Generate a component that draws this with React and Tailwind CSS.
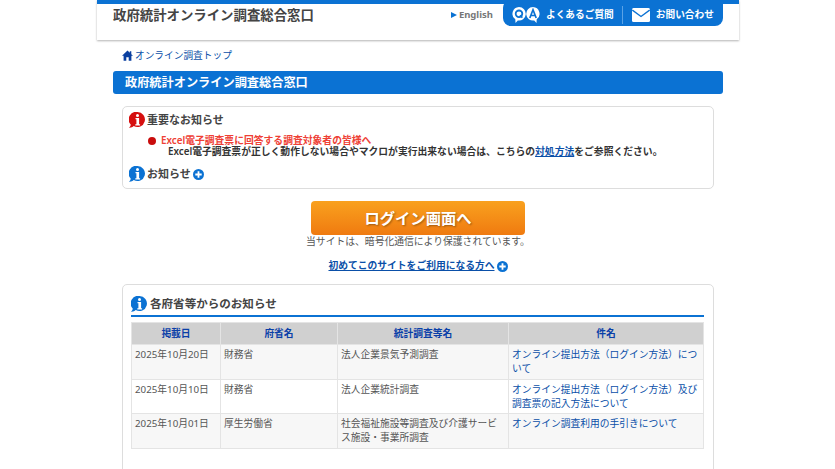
const FONT = "font-['Noto_Sans','Noto_Sans_CJK_JP',sans-serif]"

const ROWS = [
  { date: '2025年10月20日', org: '財務省', survey: '法人企業景気予測調査', title: 'オンライン提出方法（ログイン方法）について', bg: 'bg-[#f7f7f7]' },
  { date: '2025年10月10日', org: '財務省', survey: '法人企業統計調査', title: 'オンライン提出方法（ログイン方法）及び調査票の記入方法について', bg: 'bg-white' },
  { date: '2025年10月01日', org: '厚生労働省', survey: '社会福祉施設等調査及び介護サービス施設・事業所調査', title: 'オンライン調査利用の手引きについて', bg: 'bg-[#f7f7f7]' },
]

function InfoIcon({ color, size = 16 }) {
  return (
    <svg width={size} height={size} viewBox="0 0 16 16" className="shrink-0">
      <path d="M8.500 0a7.500 7.500 0 1 1-3.800 14C3.600 15.300 1.800 15.900 0 15.700c1-.7 1.700-1.800 1.700-3.200A7.500 7.500 0 0 1 8.500 0z" fill={color} />
      <circle cx="8.500" cy="3.500" r="1.500" fill="#fff" />
      <path d="M6.500 6h3.600v6.300h1v1.200H6.300v-1.200h1.100V7.200H6.500z" fill="#fff" />
    </svg>
  )
}

function PlusIcon() {
  return (
    <svg width="11" height="11" viewBox="0 0 11 11" className="shrink-0">
      <circle cx="5.500" cy="5.500" r="5.500" fill="#0b72d3" />
      <path d="M5.500 2.300v6.400M2.300 5.500h6.400" stroke="#fff" strokeWidth="1.800" />
    </svg>
  )
}

function QaIcon() {
  return (
    <svg width="28" height="19" viewBox="0 0 28 19" className="shrink-0">
      <path d="M7 2a6.800 6.800 0 1 1-1.200 13.500L3.500 18l-.2-3.700A6.800 6.800 0 0 1 7 2z" fill="#fff" />
      <circle cx="7" cy="8.800" r="3.300" fill="none" stroke="#0b72d3" strokeWidth="1.800" />
      <path d="M8 10.200l2.400 2.400" stroke="#0b72d3" strokeWidth="1.600" />
      <path d="M21 2a6.800 6.800 0 1 0 1.200 13.500L24.500 18l.2-3.700A6.800 6.800 0 0 0 21 2z" fill="#fff" />
      <path d="M17.800 13L21 4.800l3.200 8.200M19 10.500h4" fill="none" stroke="#0b72d3" strokeWidth="1.700" />
    </svg>
  )
}

function MailIcon() {
  return (
    <svg width="18" height="14" viewBox="0 0 18 14" className="shrink-0">
      <rect width="18" height="14" rx="1.500" fill="#fff" />
      <path d="M0.300 2L9 8.500 17.700 2" fill="none" stroke="#0b72d3" strokeWidth="1.400" />
    </svg>
  )
}

function HomeIcon() {
  return (
    <svg width="11" height="11" viewBox="0 0 11 11" className="-mt-[1px] shrink-0">
      <path d="M5.500.5L0 5.800h1.600V10.800h2.700V7.300h2.400v3.500h2.700V5.800H11L9.300 4.200V1.200H7.800v1.500z" fill="#0a3fa0" />
    </svg>
  )
}

export default function App() {
  return (
    <div className={`${FONT} h-[469px] overflow-hidden bg-white text-[#444]`}>
      <div className="ml-[97px] w-[642px]">
        {/* Header */}
        <header className="h-10 bg-white shadow-[0_1px_2px_0_rgba(0,0,0,0.3)]">
          <div className="h-1 bg-[#0b72d3]" />
          <div className="flex items-start">
            <h1 className="ml-4 text-[13.400px] leading-[22px] font-semibold text-[#444]">政府統計オンライン調査総合窓口</h1>
            <div className="ml-auto flex items-start">
              <div className="mr-[10px] mt-[3px] flex items-center text-[9.500px] leading-4 font-bold text-[#777]">
                <span className="mr-[2px] h-0 w-0 border-y-[3.500px] border-l-[6px] border-y-transparent border-l-[#0b72d3]" />
                English
              </div>
              <div className="-mt-1 mr-4 flex h-[26px] w-[220px] items-center rounded-tl-lg rounded-b-lg bg-[#0b72d3] pt-[5px] text-[9.700px] font-semibold text-white">
                <div className="-mt-[2px] ml-[9px]"><QaIcon /></div>
                <span className="ml-[6px]">よくあるご質問</span>
                <span className="-mt-[2px] ml-2 h-[18px] w-px bg-[#5aa2e6]" />
                <div className="-mt-[2px] ml-[9px]"><MailIcon /></div>
                <span className="ml-[6px]">お問い合わせ</span>
              </div>
            </div>
          </div>
        </header>

        <main className="px-4">
          {/* Breadcrumb */}
          <div className="mt-[9px] ml-[9px] flex items-center gap-[2px] text-[9.700px] leading-[14px] text-[#0a4fa8]">
            <HomeIcon />
            オンライン調査トップ
          </div>

          {/* Page title */}
          <h2 className="mt-[8px] h-[23px] rounded-[3px] bg-[#0b72d3] pl-3 text-[12.200px] leading-[23px] font-semibold text-white">
            政府統計オンライン調査総合窓口
          </h2>

          {/* Notice box */}
          <section className="mx-[9px] mt-3 h-[83px] rounded-[5px] border border-[#ddd] pl-[6px]">
            <div className="flex items-center gap-[2px] pt-[5px]">
              <InfoIcon color="#d60f0f" />
              <span className="text-[11px] leading-4 font-semibold">重要なお知らせ</span>
            </div>
            <div className="mt-2 ml-[19px] flex items-center gap-[5px] text-[9.800px] leading-[10px] font-semibold text-[#ee4035]">
              <span className="h-2 w-2 rounded-full bg-[#c90c0c]" />
              Excel電子調査票に回答する調査対象者の皆様へ
            </div>
            <p className="ml-[39px] text-[9.800px] leading-[11px] font-semibold text-[#333]">
              Excel電子調査票が正しく動作しない場合やマクロが実行出来ない場合は、こちらの
              <span className="text-[#0a4fa8] underline">対処方法</span>をご参照ください。
            </p>
            <div className="mt-[9px] flex items-center gap-[2px]">
              <InfoIcon color="#0b72d3" />
              <span className="text-[11px] leading-4 font-semibold">お知らせ</span>
              <PlusIcon />
            </div>
          </section>

          {/* Login */}
          <div className="mt-3 flex flex-col items-center">
            <button className="h-[34px] w-[214px] rounded-[4px] bg-gradient-to-b from-[#f9a11e] to-[#ef7a10] text-[15.300px] font-semibold text-white [text-shadow:1px_1px_2px_rgba(0,0,0,0.35)]">
              ログイン画面へ
            </button>
            <p className="text-[9.800px] leading-[13px] text-[#555]">当サイトは、暗号化通信により保護されています。</p>
            <div className="mt-[11px] flex items-center gap-[2px] text-[9.770px] leading-[14px] font-semibold text-[#0a4fa8]">
              <span className="underline">初めてこのサイトをご利用になる方へ</span>
              <PlusIcon />
            </div>
          </div>

          {/* Ministry notices */}
          <section className="mx-[9px] mt-[11px] h-[300px] rounded-[5px] border border-[#ddd] pl-2 pr-[9px] pt-[11px]">
            <div className="flex items-center gap-[3px] border-b-2 border-[#0b72d3] pb-[3px]">
              <InfoIcon color="#0b72d3" />
              <span className="text-[11.550px] leading-4 font-semibold">各府省等からのお知らせ</span>
            </div>
            <table className="mt-[5px] w-full table-fixed border-collapse text-[9.750px] leading-[14px] text-[#555]">
              <thead>
                <tr className="h-[22px] bg-[#d0d0d0] text-[#0a3fa8]">
                  <th className="w-[89px] border border-[#e4e4e4] font-semibold">掲載日</th>
                  <th className="w-[117px] border border-[#e4e4e4] font-semibold">府省名</th>
                  <th className="w-[171px] border border-[#e4e4e4] font-semibold">統計調査等名</th>
                  <th className="border border-[#e4e4e4] font-semibold">件名</th>
                </tr>
              </thead>
              <tbody>
                {ROWS.map(r => (
                  <tr key={r.date} className={`${r.bg} h-[34.500px] align-top`}>
                    <td className="border border-[#e4e4e4] px-[3px] pt-[3px]">{r.date}</td>
                    <td className="border border-[#e4e4e4] px-[3px] pt-[3px]">{r.org}</td>
                    <td className="border border-[#e4e4e4] px-[3px] pt-[3px]">{r.survey}</td>
                    <td className="border border-[#e4e4e4] px-[3px] pt-[3px] text-[#0a4fa8]">{r.title}</td>
                  </tr>
                ))}
              </tbody>
            </table>
          </section>
        </main>
      </div>
    </div>
  )
}
